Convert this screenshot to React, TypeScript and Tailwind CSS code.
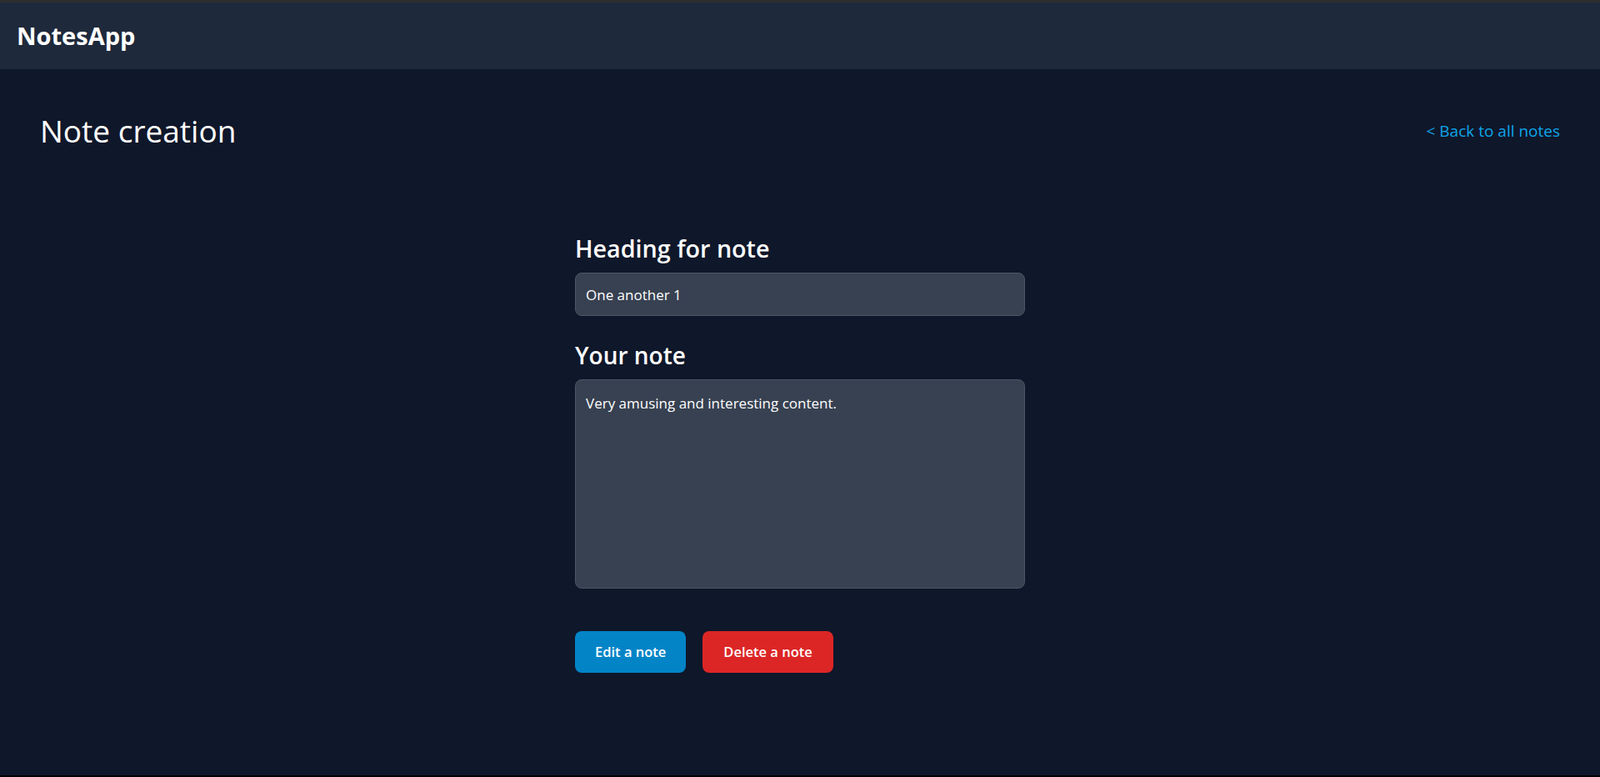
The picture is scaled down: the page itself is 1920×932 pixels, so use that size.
import React from "react";

export default function App() {
  return (
    <div
      className="min-h-screen flex flex-col bg-[#0f172a] text-white"
      style={{ fontFamily: '"Open Sans", "Noto Sans", sans-serif' }}
    >
      <div className="h-[3px] bg-[#2e2e2e]" />
      <header className="h-20 bg-[#1e293b] flex items-center px-5">
        <span className="text-[29px] leading-9 font-bold">NotesApp</span>
      </header>
      <main className="flex-1 px-12">
        <div className="flex items-center justify-between mt-[54px] h-10">
          <h1 className="text-[37px] leading-10 font-medium">Note creation</h1>
          <a className="text-[19px] text-[#0ea5e9] cursor-pointer">&lt; Back to all notes</a>
        </div>
        <form className="mx-auto w-[540px] mt-[103px]" onSubmit={(e) => e.preventDefault()}>
          <label className="block text-[28.7px] leading-9 font-semibold mb-[11px]">Heading for note</label>
          <input
            className="block w-full h-[52px] px-3 rounded-lg bg-[#374151] border border-[#4b5563] text-[17px] text-white outline-none"
            defaultValue="One another 1"
          />
          <label className="block text-[28px] leading-9 font-semibold mt-[29px] mb-[11px]">Your note</label>
          <textarea
            className="block w-full h-[251px] px-3 pt-[16px] pb-3 rounded-lg bg-[#374151] border border-[#4b5563] text-[17px] leading-6 text-white outline-none resize-none"
            defaultValue="Very amusing and interesting content."
          />
          <div className="flex gap-5 mt-[51px]">
            <button type="button" className="h-[50px] px-6 rounded-lg bg-[#0284c7] text-[16.5px] font-semibold text-white">
              Edit a note
            </button>
            <button type="button" className="h-[50px] px-[25px] rounded-lg bg-[#dc2626] text-[16.5px] font-semibold text-white">
              Delete a note
            </button>
          </div>
        </form>
      </main>
      <div className="h-[2px] bg-black" />
    </div>
  );
}
